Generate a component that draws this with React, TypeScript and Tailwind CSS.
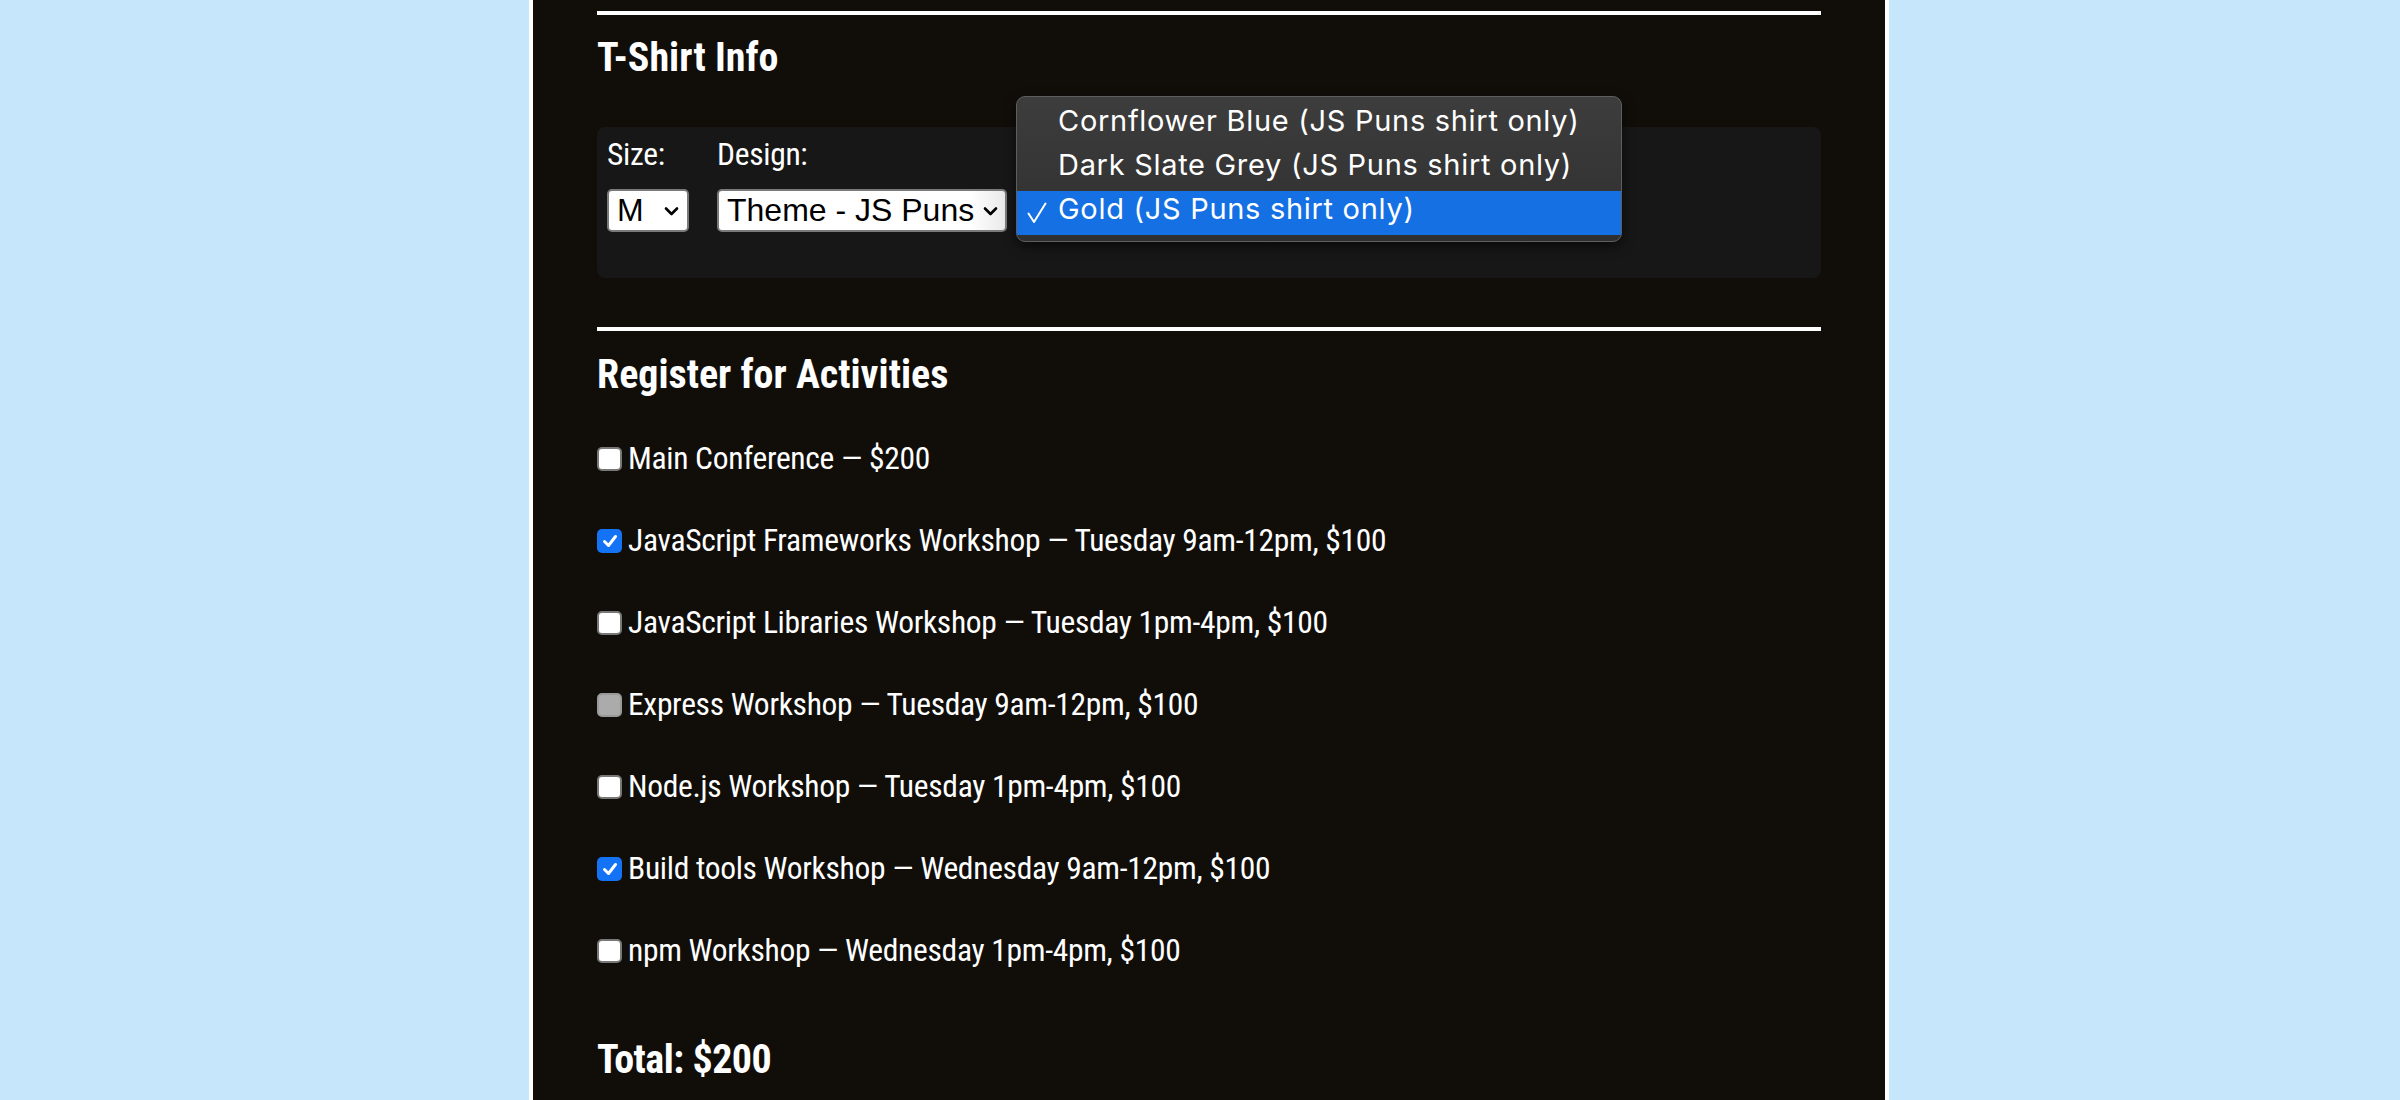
type BoxState = "off" | "on" | "disabled"

const activities: { label: string; state: BoxState }[] = [
  { label: "Main Conference — $200", state: "off" },
  { label: "JavaScript Frameworks Workshop — Tuesday 9am-12pm, $100", state: "on" },
  { label: "JavaScript Libraries Workshop — Tuesday 1pm-4pm, $100", state: "off" },
  { label: "Express Workshop — Tuesday 9am-12pm, $100", state: "disabled" },
  { label: "Node.js Workshop — Tuesday 1pm-4pm, $100", state: "off" },
  { label: "Build tools Workshop — Wednesday 9am-12pm, $100", state: "on" },
  { label: "npm Workshop — Wednesday 1pm-4pm, $100", state: "off" },
]

function Chevron() {
  return (
    <svg width="15" height="10" viewBox="0 0 15 10" className="shrink-0">
      <path d="M2 2.5 L7.5 8 L13 2.5" fill="none" stroke="#000" strokeWidth="2.6" strokeLinecap="round" strokeLinejoin="round" />
    </svg>
  )
}

function CheckBox({ state }: { state: BoxState }) {
  if (state === "on") {
    return (
      <span className="flex h-[24px] w-[25px] shrink-0 items-center justify-center rounded-[5px] bg-[#1473f4]">
        <svg width="18" height="18" viewBox="0 0 18 18">
          <path d="M3.5 9.5 L7.5 13.5 L14.5 4.5" fill="none" stroke="#fff" strokeWidth="3" strokeLinecap="round" strokeLinejoin="round" />
        </svg>
      </span>
    )
  }
  if (state === "disabled") {
    return <span className="h-[24px] w-[25px] shrink-0 rounded-[5px] border-2 border-[#999] bg-[#ababab]" />
  }
  return <span className="h-[24px] w-[25px] shrink-0 rounded-[5px] border-2 border-[#787878] bg-white" />
}

export default function App() {
  return (
    <div className="h-[1100px] w-full overflow-hidden bg-[#c5e6fb]">
      <div className="ml-[529px] h-full w-[1360px] border-x-4 border-white bg-[#110e0a] px-[64px] pt-[11px] font-['Roboto',sans-serif] font-stretch-[75%] tracking-[-0.3px] text-white">
        <div className="h-[4px] bg-white" />
        <h2 className="mt-[19px] text-[40px] font-bold leading-[48px] tracking-normal">T-Shirt Info</h2>

        <div className="relative mt-[45px] h-[151px] rounded-[8px] bg-[#171717] pl-[10px] pt-[8px]">
          <div className="flex gap-[28px]">
            <div className="flex flex-col">
              <span className="text-[31.5px] leading-[40px]">Size:</span>
              <div className="mt-[14px] flex h-[43px] w-[82px] items-center justify-between rounded-[5px] border-2 border-[#7a7a7a] bg-white pl-[8px] pr-[8px] font-['Liberation_Sans',Arial,sans-serif] text-[32px] font-stretch-normal leading-[39px] tracking-normal text-black">
                <span>M</span>
                <Chevron />
              </div>
            </div>
            <div className="flex flex-col">
              <span className="text-[31.5px] leading-[40px]">Design:</span>
              <div className="mt-[14px] flex h-[43px] w-[290px] items-center justify-between rounded-[5px] border-2 border-[#7a7a7a] bg-[linear-gradient(90deg,#fff_88%,#e9e9e9)] pl-[8px] pr-[7px] font-['Liberation_Sans',Arial,sans-serif] text-[32px] font-stretch-normal leading-[39px] tracking-normal text-black">
                <span className="whitespace-nowrap">Theme - JS Puns</span>
                <Chevron />
              </div>
            </div>
          </div>

          <div className="absolute left-[419px] top-[-31px] h-[146px] w-[606px] rounded-[9px] border border-[#5e5e5e] bg-[linear-gradient(180deg,#3d3d3d,#2f2f2f)] py-[6px] font-['Inter',sans-serif] text-[29px] font-stretch-normal tracking-[0.7px] text-white shadow-[0_4px_12px_rgba(0,0,0,0.6)]">
            <div className="h-[44px] pl-[41px] pt-[1px] leading-[34px]">Cornflower Blue (JS Puns shirt only)</div>
            <div className="h-[44px] pl-[41px] pt-[1px] leading-[34px]">Dark Slate Grey (JS Puns shirt only)</div>
            <div className="flex h-[44px] items-start bg-[#1570e3] pl-[10px] pt-[1px] leading-[34px]">
              <svg width="20" height="22" viewBox="0 0 20 22" className="mr-[11px] mt-[10px] shrink-0">
                <path d="M1.5 11.5 L7 20 L18.5 1.5" fill="none" stroke="#fff" strokeWidth="2" strokeLinecap="round" strokeLinejoin="round" />
              </svg>
              <span>Gold (JS Puns shirt only)</span>
            </div>
          </div>
        </div>

        <div className="mt-[49px] h-[4px] bg-white" />
        <h2 className="mt-[20px] text-[40px] font-bold leading-[48px] tracking-normal">Register for Activities</h2>

        <div className="mt-[40px] flex flex-col gap-[42px]">
          {activities.map((a) => (
            <label key={a.label} className="flex h-[40px] items-center gap-[6px] text-[31.5px] leading-[40px]">
              <CheckBox state={a.state} />
              <span className="whitespace-nowrap">{a.label}</span>
            </label>
          ))}
        </div>

        <p className="mt-[65px] text-[40px] font-bold leading-[48px] tracking-[-0.5px]">Total: $200</p>
      </div>
    </div>
  )
}
